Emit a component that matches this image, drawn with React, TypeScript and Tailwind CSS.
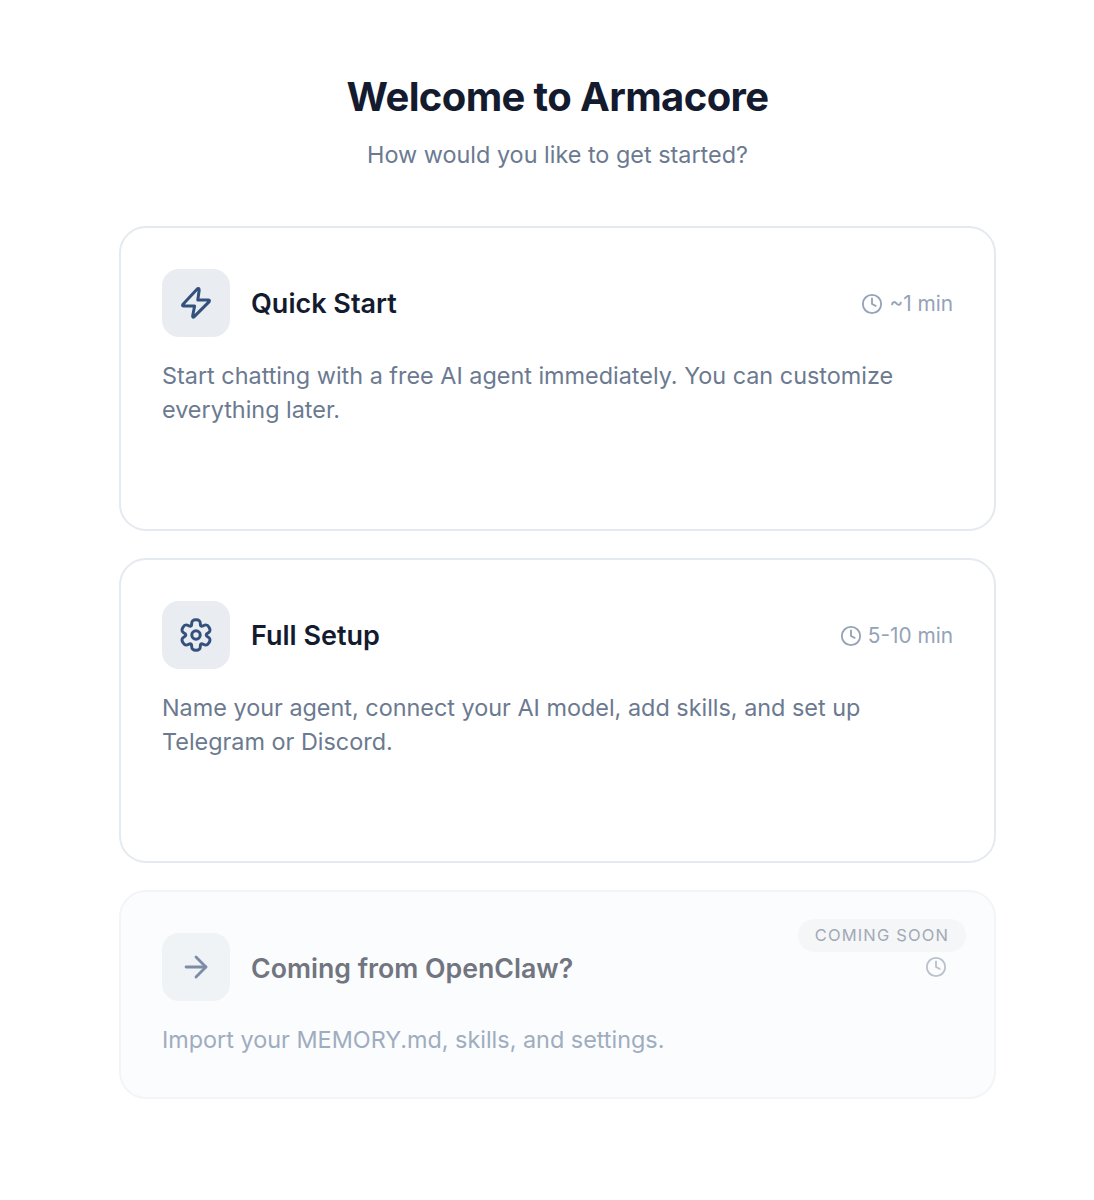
import { ArrowRight, Clock } from "lucide-react";

const polar = (deg: number, r: number) => {
  const t = (deg * Math.PI) / 180;
  return `${(20 + r * Math.cos(t)).toFixed(2)} ${(20 + r * Math.sin(t)).toFixed(2)}`;
};

const gearPath =
  `M${polar(-120, 10.4)}` +
  [0, 1, 2, 3, 4, 5]
    .map((i) => {
      const a = -90 + 60 * i;
      return (
        `C${polar(a - 18, 9.6)} ${polar(a - 24, 16.6)} ${polar(a, 15.2)}` +
        `C${polar(a + 24, 16.6)} ${polar(a + 18, 9.6)} ${polar(a + 30, 10.4)}`
      );
    })
    .join("") +
  "Z";

function BoltIcon() {
  return (
    <svg viewBox="0 0 40 40" className="h-[40px] w-[40px]" fill="none" stroke="currentColor" strokeWidth={3} strokeLinejoin="round" strokeLinecap="round">
      <path d="M21 6.2 L6.8 21.4 Q6 23 7.8 23 H18.6 L16.6 33.2 Q16.8 35 18.2 33.6 L33.2 18.6 Q34 17 32.2 17 H21.8 L23.2 7 Q23 4.4 21 6.2 Z" />
    </svg>
  );
}

function GearIcon() {
  return (
    <svg viewBox="0 0 40 40" className="h-[40px] w-[40px]" fill="none" stroke="currentColor" strokeWidth={3} strokeLinejoin="round">
      <path d={gearPath} />
      <circle cx="20" cy="20" r="4.2" />
    </svg>
  );
}

function Time({ label }: { label: string }) {
  return (
    <div className="flex items-center gap-[6px] pt-[1px] text-[20.8px] leading-[30px] text-[#94a3b8]">
      <Clock className="h-[22px] w-[22px]" strokeWidth={2} />
      <span>{label}</span>
    </div>
  );
}

export default function App() {
  return (
    <div className="min-h-[1200px] bg-white pl-[119px] pt-[70px] font-['Inter',sans-serif]" >
      <div className="w-[877px]">
        <h1 className="text-center text-[40px] font-bold leading-[54px] tracking-[-0.62px] text-[#141b2f]">Welcome to Armacore</h1>
        <p className="mt-[15px] text-center text-[23.4px] leading-[32px] text-[#6b7a90]">How would you like to get started?</p>
        <div className="mt-[55px] flex flex-col gap-[27px]">
          <section className="h-[305px] rounded-[27px] border-2 border-[#e5e9f0] bg-white px-[41px] pt-[41px]">
            <div className="flex items-center gap-[21px]">
              <div className="flex h-[68px] w-[68px] items-center justify-center rounded-[17px] bg-[#e9edf1] text-[#34507c]">
                <BoltIcon />
              </div>
              <h2 className="flex-1 pt-[2px] text-[27px] font-semibold leading-[36px] text-[#141b2f]">Quick Start</h2>
              <Time label="~1 min" />
            </div>
            <p className="mt-[22px] text-[23.4px] leading-[34px] text-[#6b7a90]">Start chatting with a free AI agent immediately. You can customize everything later.</p>
          </section>
          <section className="h-[305px] rounded-[27px] border-2 border-[#e5e9f0] bg-white px-[41px] pt-[41px]">
            <div className="flex items-center gap-[21px]">
              <div className="flex h-[68px] w-[68px] items-center justify-center rounded-[17px] bg-[#e9edf1] text-[#34507c]">
                <GearIcon />
              </div>
              <h2 className="flex-1 pt-[2px] text-[27px] font-semibold leading-[36px] text-[#141b2f]">Full Setup</h2>
              <Time label="5-10 min" />
            </div>
            <p className="mt-[22px] text-[23.4px] leading-[34px] text-[#6b7a90]">Name your agent, connect your AI model, add skills, and set up Telegram or Discord.</p>
          </section>
          <section className="relative h-[209px] rounded-[27px] border-2 border-[#f2f4f7] bg-[#fbfcfd] px-[41px] pt-[41px]">
            <span className="absolute right-[28px] top-[27px] flex h-[33px] items-center rounded-full bg-[#f4f6f8] px-[17px] text-[16.5px] tracking-[1.15px] text-[#a3a9b4]">COMING SOON</span>
            <div className="flex items-center gap-[21px]">
              <div className="flex h-[68px] w-[68px] items-center justify-center rounded-[17px] bg-[#f0f3f5] text-[#7c8ca6]">
                <ArrowRight className="h-[34px] w-[34px]" strokeWidth={2} />
              </div>
              <h2 className="flex-1 pt-[2px] text-[26.7px] font-semibold leading-[36px] text-[#71757f]">Coming from OpenClaw?</h2>
              <Clock className="mr-[6px] h-[22px] w-[22px] text-[#bac2ce]" strokeWidth={2} />
            </div>
            <p className="mt-[22px] text-[23.4px] leading-[34px] text-[#9fadc0]">Import your MEMORY.md, skills, and settings.</p>
          </section>
        </div>
      </div>
    </div>
  );
}
